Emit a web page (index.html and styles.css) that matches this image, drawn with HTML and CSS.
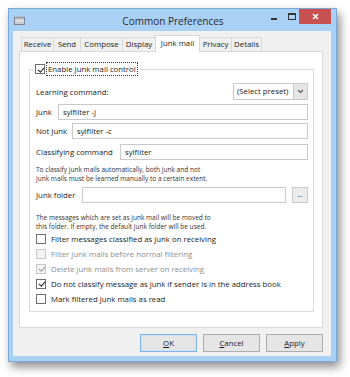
FILE: index.html
```html
<!DOCTYPE html>
<html>
<head>
<meta charset="utf-8">
<link rel="stylesheet" href="styles.css">
</head>
<body>
<div class="window">
  <div class="titlebar">
    <svg class="app-icon" width="11" height="9" viewBox="0 0 11 9"><rect x="0.5" y="1.5" width="10" height="7" fill="#c9ccd3" stroke="#7d8290"/><rect x="3" y="0.5" width="5" height="2" fill="#9aa0ad"/><path d="M1 5h9" stroke="#eef0f4"/></svg>
    <div class="title">Common Preferences</div>
    <div class="caption-btns">
      <div class="cap-min"></div>
      <div class="cap-max"></div>
      <div class="cap-close"><svg width="7" height="7" viewBox="0 0 7 7"><path d="M1 1l5 5M6 1l-5 5" stroke="#fff" stroke-width="1.6"/></svg></div>
    </div>
  </div>
  <div class="client">
    <div class="tabs">
      <div class="tab t-receive">Receive</div>
      <div class="tab t-send">Send</div>
      <div class="tab t-compose">Compose</div>
      <div class="tab t-display">Display</div>
      <div class="tab active t-junk">Junk mail</div>
      <div class="tab t-privacy">Privacy</div>
      <div class="tab t-details">Details</div>
    </div>
    <div class="panel">
      <fieldset class="group">
        <legend class="legend"><span class="cb checked"></span><span class="focus">Enable Junk mail control</span></legend>
        <div class="row r-learn">
          <span class="lbl">Learning command:</span>
          <div class="combo"><span class="combo-text">(Select preset)</span><span class="combo-btn"><svg width="7" height="5" viewBox="0 0 7 5"><path d="M1 1l2.5 2.5L6 1" fill="none" stroke="#555" stroke-width="1.1"/></svg></span></div>
        </div>
        <div class="row r-junk">
          <span class="lbl">Junk</span>
          <div class="input">sylfilter -j</div>
        </div>
        <div class="row r-notjunk">
          <span class="lbl">Not Junk</span>
          <div class="input">sylfilter -c</div>
        </div>
        <div class="row r-class">
          <span class="lbl">Classifying command</span>
          <div class="input">sylfilter</div>
        </div>
        <p class="note n1">To classify junk mails automatically, both junk and not<br>junk mails must be learned manually to a certain extent.</p>
        <div class="row r-folder">
          <span class="lbl">Junk folder</span>
          <div class="input"></div>
          <div class="dots">...</div>
        </div>
        <p class="note n2">The messages which are set as junk mail will be moved to<br>this folder. If empty, the default junk folder will be used.</p>
        <div class="checks">
          <div class="check"><span class="cb"></span>Filter messages classified as junk on receiving</div>
          <div class="check disabled"><span class="cb"></span>Filter junk mails before normal filtering</div>
          <div class="check disabled"><span class="cb checked"></span>Delete junk mails from server on receiving</div>
          <div class="check"><span class="cb checked"></span>Do not classify message as junk if sender is in the address book</div>
          <div class="check"><span class="cb"></span>Mark filtered junk mails as read</div>
        </div>
      </fieldset>
    </div>
    <div class="buttons">
      <div class="btn default"><u>O</u>K</div>
      <div class="btn"><u>C</u>ancel</div>
      <div class="btn"><u>A</u>pply</div>
    </div>
  </div>
</div>
</body>
</html>
```
FILE: styles.css
```css
* { box-sizing: border-box; }
html, body { margin: 0; padding: 0; background: #fff; }
body {
  font-family: "Open Sans", "Noto Sans", sans-serif;
  font-size: 7.8px;
  color: #1a1a1a;
  width: 350px;
  height: 377px;
  overflow: hidden;
}
.window {
  margin: 8px 0 0 8px;
  width: 329px;
  height: 354px;
  background: #a9d0f5;
  border: 1px solid #7ba7d6;
  box-shadow: 3px 5px 9px rgba(0,0,0,0.45);
  padding: 0 5px 5px 4px;
  display: flex;
  flex-direction: column;
}
.titlebar {
  height: 22px;
  display: flex;
  align-items: center;
}
.app-icon { margin: 0 0 0 1px; flex: none; }
.title {
  flex: 1;
  text-align: center;
  font-size: 10px;
  color: #2b2b2b;
  padding-left: 50px;
  padding-top: 1px;
  white-space: nowrap;
}
.caption-btns {
  display: flex;
  align-items: flex-start;
  align-self: flex-start;
  height: 15px;
}
.cap-min {
  width: 6px; height: 2px; background: #333;
  margin: 9px 11px 0 0;
}
.cap-max {
  width: 8px; height: 7px; border: 1px solid #333; border-top-width: 2px;
  margin: 4px 3px 0 0;
}
.cap-close {
  width: 32px; height: 15px; background: #c75050;
  display: flex; align-items: center; justify-content: center;
}
.client {
  flex: 1;
  background: #f0f0f0;
  padding: 4px 8px 0 6px;
  display: flex;
  flex-direction: column;
}
.tabs {
  display: flex;
  height: 16px;
  margin-left: 2px;
  align-items: flex-end;
  position: relative;
  z-index: 1;
}
.tab {
  height: 14px;
  border: 1px solid #d9d9d9;
  border-bottom: none;
  background: #f0f0f0;
  line-height: 13px;
  text-align: center;
  margin-right: -1px;
  white-space: nowrap;
}
.tab.active {
  height: 17px;
  background: #fff;
  margin-bottom: -1px;
  line-height: 15px;
}
.t-receive { width: 33px; }
.t-send { width: 28px; }
.t-compose { width: 43px; }
.t-display { width: 34px; }
.t-junk { width: 45px; }
.t-privacy { width: 33px; }
.t-details { width: 31px; }
.panel {
  background: #fff;
  border: 1px solid #d9d9d9;
  height: 277px;
  padding: 10px 8px 0 9px;
}
.group {
  margin: 0;
  border: 1px solid #dcdcdc;
  padding: 0 5px 5px 6px;
  display: flex;
  flex-direction: column;
  min-width: 0;
}
.legend {
  margin-left: -3px;
  padding: 0 2px;
  display: flex;
  align-items: center;
  height: 14px;
}
.legend .cb { margin-right: 1px; }
.focus {
  border: 1px dotted #333;
  padding: 0 1px;
  line-height: 12px;
  height: 14px;
}
.row { display: flex; align-items: center; }
.lbl { white-space: nowrap; }
.r-learn { height: 17px; margin-top: 7px; justify-content: space-between; }
.r-junk { height: 16px; margin-top: 4px; }
.r-notjunk { height: 16px; margin-top: 3px; }
.r-class { height: 16px; margin-top: 5px; }
.r-folder { height: 16px; margin-top: 4px; }
.input {
  flex: 1;
  height: 100%;
  border: 1px solid #c9c9c9;
  background: #fff;
  line-height: 14px;
  padding-left: 4px;
}
.r-junk .lbl { width: 22px; }
.r-notjunk .lbl { width: 36px; }
.r-class .lbl { width: 84px; }
.r-folder .lbl { width: 46px; }
.dots {
  width: 16px; height: 16px;
  margin-left: 6px;
  border: 1px solid #c9c9c9;
  background: #ececec;
  font-size: 7px;
  line-height: 13px;
  text-align: center;
  color: #222;
}
.combo {
  width: 75px; height: 17px;
  border: 1px solid #c9c9c9;
  background: #fff;
  display: flex;
}
.combo-text {
  flex: 1;
  line-height: 15px;
  padding-left: 3px;
  white-space: nowrap;
}
.combo-btn {
  width: 14px;
  flex: none;
  background: #e5e5e5;
  border-left: 1px solid #c9c9c9;
  display: flex; align-items: center; justify-content: center;
}
.note {
  margin: 0;
  font-size: 6.55px;
  line-height: 9px;
  color: #333;
  white-space: nowrap;
}
.n1 { margin-top: 5px; height: 18px; }
.n2 { margin-top: 10px; height: 18px; }
.checks { display: flex; flex-direction: column; }
.check {
  height: 15px;
  display: flex;
  align-items: center;
  white-space: nowrap;
}
.check .cb { margin-right: 5px; }
.check.disabled { color: #8d8d8d; }
.cb {
  width: 10px; height: 10px;
  border: 1px solid #6f6f6f;
  background: #fff;
  flex: none;
  position: relative;
}
.check.disabled .cb { border-color: #c6c6c6; background: #f3f3f3; }
.cb.checked::after {
  content: "";
  position: absolute;
  left: 2.5px; top: 0.5px;
  width: 2.5px; height: 5px;
  border: solid #222;
  border-width: 0 1.4px 1.4px 0;
  transform: rotate(40deg);
}
.check.disabled .cb.checked::after { border-color: #9a9a9a; }
.buttons {
  display: flex;
  justify-content: flex-end;
  gap: 6px;
  margin-top: 6px;
}
.btn {
  width: 57px; height: 18px;
  border: 1px solid #adadad;
  background: #e5e5e5;
  line-height: 16px;
  text-align: center;
}
.btn.default { border-color: #7eb4ea; box-shadow: inset 0 0 0 1px #d2e5f8; }
```
